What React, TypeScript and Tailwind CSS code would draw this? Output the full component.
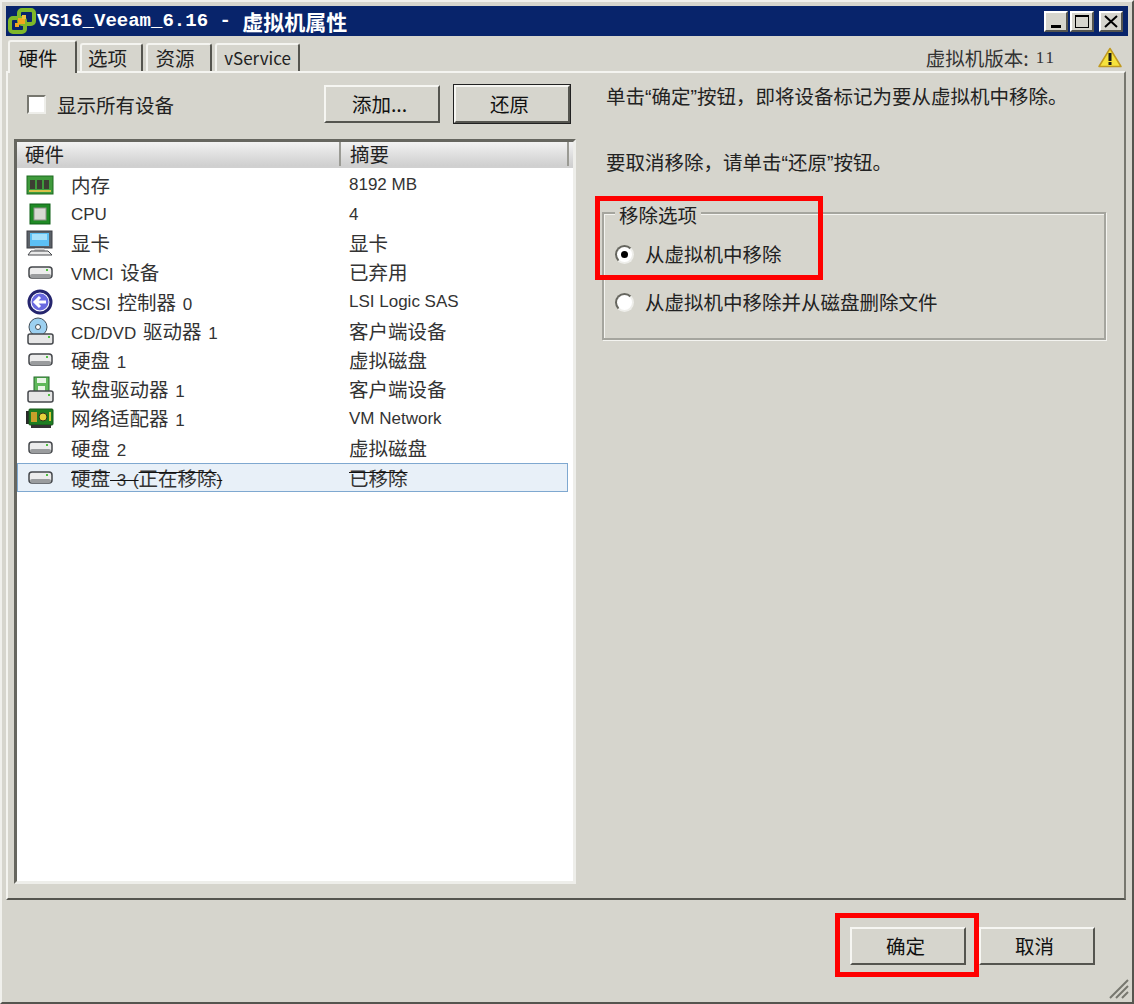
import type { ReactNode } from 'react';

const CJK = '[font-family:"Noto_Sans_CJK_SC","Liberation_Sans",sans-serif]';

// CJK glyphs run bigger than the Latin text next to them in the original
function Zh({ children }: { children: ReactNode }) {
  return <span className="font-['Noto_Sans_CJK_SC',sans-serif] text-[19.5px]">{children}</span>;
}

// the original's curly quotes are narrow, Noto's are not
function Q({ children }: { children: ReactNode }) {
  return <span className="font-['Liberation_Sans',sans-serif]">{children}</span>;
}

function RamIcon() {
  return (
    <svg width="28" height="20" viewBox="0 0 28 20">
      <rect x="1" y="1" width="26" height="18" fill="#3f9a3c" stroke="#1d6a1f" />
      <rect x="4" y="5" width="5" height="9" fill="#3d3d33" />
      <rect x="11" y="5" width="5" height="9" fill="#3d3d33" />
      <rect x="18" y="5" width="5" height="9" fill="#3d3d33" />
      <rect x="3" y="15" width="22" height="2" fill="#d8c24a" />
    </svg>
  );
}

function CpuIcon() {
  return (
    <svg width="22" height="22" viewBox="0 0 22 22">
      <rect x="1" y="1" width="20" height="20" fill="#1f8a25" stroke="#0f5f16" />
      <rect x="5" y="5" width="12" height="12" fill="#d9d9d4" stroke="#8f8f8a" />
    </svg>
  );
}

function MonitorIcon() {
  return (
    <svg width="28" height="26" viewBox="0 0 28 26">
      <rect x="1" y="1" width="25" height="17" fill="#5b6168" stroke="#3c3f44" />
      <rect x="4" y="3" width="19" height="13" fill="#5cc0f5" />
      <rect x="6" y="4" width="15" height="6" fill="#a5e0fb" />
      <path d="M9 18h9l1 3H8z" fill="#c8c8c8" />
      <path d="M2 25l3-4h17l4 4z" fill="#e9e9e9" stroke="#44474b" />
    </svg>
  );
}

function DiskIcon() {
  return (
    <svg width="25" height="16" viewBox="0 0 25 16">
      <rect x="1" y="2" width="23" height="11" rx="3" fill="#ececec" stroke="#44474b" strokeWidth="1.5" />
      <rect x="2" y="9" width="21" height="4" rx="2" fill="#9a9c9e" />
      <rect x="18" y="4" width="2" height="2" fill="#50c040" />
    </svg>
  );
}

function ScsiIcon() {
  return (
    <svg width="26" height="26" viewBox="0 0 26 26">
      <circle cx="13" cy="13" r="11" fill="#ffffff" stroke="#25256e" strokeWidth="3" />
      <circle cx="13" cy="13" r="8.5" fill="#6a6ae0" />
      <path d="M19 13H9M13 8l-5 5 5 5" fill="none" stroke="#ffffff" strokeWidth="3" />
    </svg>
  );
}

function CdIcon() {
  return (
    <svg width="27" height="28" viewBox="0 0 27 28">
      <circle cx="11" cy="10" r="9" fill="#9cd0f0" stroke="#44505a" />
      <circle cx="11" cy="10" r="2.5" fill="#ffffff" stroke="#44505a" />
      <rect x="1" y="17" width="25" height="10" rx="2" fill="#e6e6e6" stroke="#44474b" strokeWidth="1.5" />
      <rect x="21" y="19" width="2" height="2" fill="#50c040" />
    </svg>
  );
}

function FloppyIcon() {
  return (
    <svg width="27" height="27" viewBox="0 0 27 27">
      <rect x="7" y="1" width="15" height="15" fill="#5fb85a" stroke="#24692a" />
      <rect x="10" y="2" width="9" height="5" fill="#e8f5e6" />
      <rect x="11" y="10" width="7" height="6" fill="#e8f5e6" />
      <rect x="1" y="15" width="25" height="11" rx="2" fill="#e6e6e6" stroke="#44474b" strokeWidth="1.5" />
      <rect x="21" y="18" width="2" height="2" fill="#50c040" />
    </svg>
  );
}

function NicIcon() {
  return (
    <svg width="28" height="22" viewBox="0 0 28 22">
      <rect x="0" y="3" width="4" height="13" fill="#2a2a2a" />
      <rect x="3" y="1" width="24" height="16" rx="1" fill="#1f7d22" stroke="#16551a" />
      <rect x="5" y="4" width="6" height="10" fill="#c9a02a" />
      <circle cx="17" cy="9" r="4" fill="#e7d23c" stroke="#33331a" />
      <rect x="23" y="4" width="2" height="9" fill="#d8c83a" />
      <rect x="5" y="17" width="20" height="3" fill="#333333" />
    </svg>
  );
}

function VmwareLogo() {
  return (
    <svg width="29" height="28" viewBox="0 0 29 28">
      <rect x="12" y="3" width="15" height="14" rx="3" fill="none" stroke="#7fb82a" strokeWidth="4" />
      <rect x="3" y="11" width="15" height="14" rx="3" fill="none" stroke="#7fb82a" strokeWidth="4" />
      <rect x="11" y="11" width="7" height="6" fill="#f0a820" />
      <rect x="15" y="8" width="4" height="4" fill="#f0c040" />
      <rect x="8" y="16" width="4" height="4" fill="#f0a820" />
    </svg>
  );
}

function WarningIcon() {
  return (
    <svg width="24" height="21" viewBox="0 0 24 21">
      <path d="M12 1.5L23 19.5H1z" fill="#f7e33c" stroke="#c09a20" strokeWidth="1.5" strokeLinejoin="round" />
      <rect x="10.5" y="6" width="3" height="8" fill="#1a1a1a" />
      <rect x="10.5" y="15" width="3" height="3" fill="#1a1a1a" />
    </svg>
  );
}

interface HardwareRow {
  icon: ReactNode;
  name: ReactNode;
  summary: ReactNode;
}

const rows: HardwareRow[] = [
  { icon: <RamIcon />, name: <Zh>内存</Zh>, summary: '8192 MB' },
  { icon: <CpuIcon />, name: 'CPU', summary: '4' },
  { icon: <MonitorIcon />, name: <Zh>显卡</Zh>, summary: <Zh>显卡</Zh> },
  { icon: <DiskIcon />, name: <>VMCI <Zh>设备</Zh></>, summary: <Zh>已弃用</Zh> },
  { icon: <ScsiIcon />, name: <>SCSI <Zh>控制器</Zh> 0</>, summary: 'LSI Logic SAS' },
  { icon: <CdIcon />, name: <>CD/DVD <Zh>驱动器</Zh> 1</>, summary: <Zh>客户端设备</Zh> },
  { icon: <DiskIcon />, name: <><Zh>硬盘</Zh> 1</>, summary: <Zh>虚拟磁盘</Zh> },
  { icon: <FloppyIcon />, name: <><Zh>软盘驱动器</Zh> 1</>, summary: <Zh>客户端设备</Zh> },
  { icon: <NicIcon />, name: <><Zh>网络适配器</Zh> 1</>, summary: 'VM Network' },
  { icon: <DiskIcon />, name: <><Zh>硬盘</Zh> 2</>, summary: <Zh>虚拟磁盘</Zh> },
];

function Win2kButton({ label, className = '' }: { label: string; className?: string }) {
  return (
    <button
      className={`w-[116px] h-[38px] pr-[5px] bg-[#d6d5cd] border-2 border-t-[#f6f6f2] border-l-[#f6f6f2] border-r-[#55554f] border-b-[#55554f] text-[19.5px] text-[#111] ${className}`}
    >
      {label}
    </button>
  );
}

function Tab({ label, width, latin }: { label: string; width: string; latin?: boolean }) {
  return (
    <div
      className={`${width} h-[28px] flex items-center justify-center bg-[#d6d5cd] border-t-2 border-l-2 border-r-2 border-t-[#f4f4f0] border-l-[#f4f4f0] border-r-[#55554f] rounded-t-[3px] text-[#222] ${latin ? 'text-[17px]' : 'text-[19.5px] pr-[8px]'}`}
    >
      {label}
    </div>
  );
}

export default function App() {
  return (
    <div className={`relative w-[1134px] h-[1004px] bg-[#d6d5cd] flex flex-col overflow-hidden border-2 border-t-[#f0f0ec] border-l-[#f0f0ec] border-r-[#55554f] border-b-[#55554f] px-1 pt-1 ${CJK}`}>
      {/* Title bar */}
      <div className="h-[30px] shrink-0 bg-[#08246b] flex items-center pl-[1px] pr-[5px] text-white">
        <VmwareLogo />
        <span className="ml-[1px] font-['Liberation_Mono',monospace] font-bold text-[19px] leading-none whitespace-pre">VS16_Veeam_6.16 - </span>
        <span className="font-bold text-[21px] leading-none">虚拟机属性</span>
        <div className="ml-auto flex">
          <div className="w-[24px] h-[21px] bg-[#d6d5cd] border-2 border-t-white border-l-white border-r-[#55554f] border-b-[#55554f] flex items-end justify-center pb-[2px]">
            <div className="w-[10px] h-[3px] bg-black" />
          </div>
          <div className="ml-[2px] w-[24px] h-[21px] bg-[#d6d5cd] border-2 border-t-white border-l-white border-r-[#55554f] border-b-[#55554f] flex items-center justify-center">
            <div className="w-[14px] h-[13px] border border-t-2 border-black" />
          </div>
          <div className="ml-[5px] w-[24px] h-[21px] bg-[#d6d5cd] border-2 border-t-white border-l-white border-r-[#55554f] border-b-[#55554f] flex items-center justify-center">
            <svg width="14" height="13" viewBox="0 0 14 13">
              <path d="M1 1l12 11M13 1L1 12" stroke="#000" strokeWidth="2" />
            </svg>
          </div>
        </div>
      </div>

      {/* Tabs */}
      <div className="h-[35px] shrink-0 flex items-end gap-[3px] pl-[2px] pr-[6px] relative">
        <div className="w-[69px] h-[33px] -mb-[2px] z-10 flex items-start justify-center pt-[1px] pr-[9px] bg-[#d6d5cd] border-t-2 border-l-2 border-r-2 border-t-[#f4f4f0] border-l-[#f4f4f0] border-r-[#55554f] rounded-t-[3px] text-[19.5px] text-[#111]">
          硬件
        </div>
        <Tab label="选项" width="w-[63px]" />
        <Tab label="资源" width="w-[66px]" />
        <Tab label="vService" width="w-[85px]" latin />
        <div className="ml-auto flex items-center self-start mt-[7px]">
          <span className="text-[19.5px] text-[#333]">虚拟机版本:</span>
          <span className="ml-[7px] text-[17px] tracking-[2px] text-[#333] font-['Liberation_Serif',serif]">11</span>
          <div className="ml-[42px]"><WarningIcon /></div>
        </div>
      </div>

      {/* Panel */}
      <div className="h-[829px] shrink-0 flex border-2 border-t-[#f4f4f0] border-l-[#f4f4f0] border-r-[#77776f] border-b-[#55554f] mr-[2px]">
        {/* Left column */}
        <div className="w-[570px] shrink-0 pl-[6px]">
          <div className="h-[66px] flex items-start">
            <div className="mt-[22px] ml-[13px] w-[19px] h-[19px] bg-white border-2 border-t-[#77776f] border-l-[#77776f] border-r-[#eeeeea] border-b-[#eeeeea]" />
            <span className="mt-[19px] ml-[11px] text-[19.5px] leading-[26px] text-[#222] whitespace-nowrap">显示所有设备</span>
            <Win2kButton label="添加..." className="ml-[150px] mt-[12px] shrink-0" />
            <Win2kButton label="还原" className="ml-[14px] mt-[12px] shrink-0 outline-1 outline-[#222]" />
          </div>

          {/* Hardware table */}
          <div className="w-[562px] h-[745px] bg-white border-[3px] border-t-[#66665f] border-l-[#66665f] border-r-[#eeeeea] border-b-[#eeeeea] flex flex-col">
            <div className="h-[26px] shrink-0 flex bg-gradient-to-b from-[#f2f2f2] via-[#e0e0e0] to-[#cfcfcf] border-b-2 border-[#d0d0d0] text-[19.5px] leading-[24px] text-[#222]">
              <div className="w-[324px] pl-2 border-r-2 border-[#9a9a94]">硬件</div>
              <div className="w-[228px] pl-[9px] border-r-2 border-[#9a9a94]">摘要</div>
            </div>
            <div className="pt-[2.5px] font-['Liberation_Sans',sans-serif] text-[17px] text-[#333] [word-spacing:2px]">
              {rows.map((row, i) => (
                <div key={i} className="h-[29.2px] flex items-center">
                  <div className="w-[46px] shrink-0 flex justify-center">{row.icon}</div>
                  <div className="w-[286px] pl-[8px] whitespace-nowrap">{row.name}</div>
                  <div className="whitespace-nowrap [word-spacing:0]">{row.summary}</div>
                </div>
              ))}
              <div className="mt-[1px] w-[551px] h-[29px] flex items-center bg-[#e8f0f8] border border-[#7fa8d0]">
                <div className="w-[45px] shrink-0 flex justify-center"><DiskIcon /></div>
                <div className="w-[286px] pl-[8px] whitespace-nowrap line-through decoration-[#111]">
                  <Zh>硬盘</Zh> 3 (<Zh>正在移除</Zh>)
                </div>
                <div className="whitespace-nowrap line-through decoration-[#111]"><Zh>已移除</Zh></div>
              </div>
            </div>
          </div>
        </div>

        {/* Right column */}
        <div className="flex-1 pl-[28px] text-[19.5px] text-[#222]">
          <p className="mt-[9px] leading-[28px] whitespace-nowrap">单击<Q>“</Q>确定<Q>”</Q>按钮，即将设备标记为要从虚拟机中移除。</p>
          <p className="mt-[37px] leading-[28px] whitespace-nowrap">要取消移除，请单击<Q>“</Q>还原<Q>”</Q>按钮。</p>
          <fieldset className="mt-[22px] -ml-[4px] w-[504px] h-[141px] border-2 border-[#a5a59e] px-[11px] shadow-[inset_1px_1px_0_#f4f4f0,1px_1px_0_#f4f4f0]">
            <legend className="ml-0 px-[4px] pt-[4px] bg-[#d6d5cd] text-[19.5px] leading-[24px]">移除选项</legend>
            <div className="h-[44px] mt-[5px] flex items-center gap-[11px]">
              <div className="w-[19px] h-[19px] rounded-full bg-white border-2 border-t-[#66665f] border-l-[#66665f] border-r-[#eeeeea] border-b-[#eeeeea] flex items-center justify-center">
                <div className="w-[7px] h-[7px] rounded-full bg-black" />
              </div>
              <span>从虚拟机中移除</span>
            </div>
            <div className="h-[44px] mt-[4px] flex items-center gap-[11px]">
              <div className="w-[19px] h-[19px] rounded-full bg-white border-2 border-t-[#66665f] border-l-[#66665f] border-r-[#eeeeea] border-b-[#eeeeea]" />
              <span>从虚拟机中移除并从磁盘删除文件</span>
            </div>
          </fieldset>
        </div>
      </div>

      {/* Footer */}
      <div className="flex-1 flex items-start justify-end pr-[33px] pt-[27px] gap-[13px]">
        <Win2kButton label="确定" />
        <Win2kButton label="取消" />
      </div>

      {/* Resize grip */}
      <svg className="absolute right-[3px] bottom-[3px]" width="22" height="22" viewBox="0 0 22 22">
        <path d="M21 3L3 21M21 9L9 21M21 15L15 21" stroke="#77776f" strokeWidth="2" />
      </svg>

      {/* Red annotation boxes */}
      <div className="absolute left-[593px] top-[194px] w-[228px] h-[84px] border-[5px] border-[#ff0000]" />
      <div className="absolute left-[833px] top-[911px] w-[144px] h-[64px] border-[5px] border-[#ff0000]" />
    </div>
  );
}
